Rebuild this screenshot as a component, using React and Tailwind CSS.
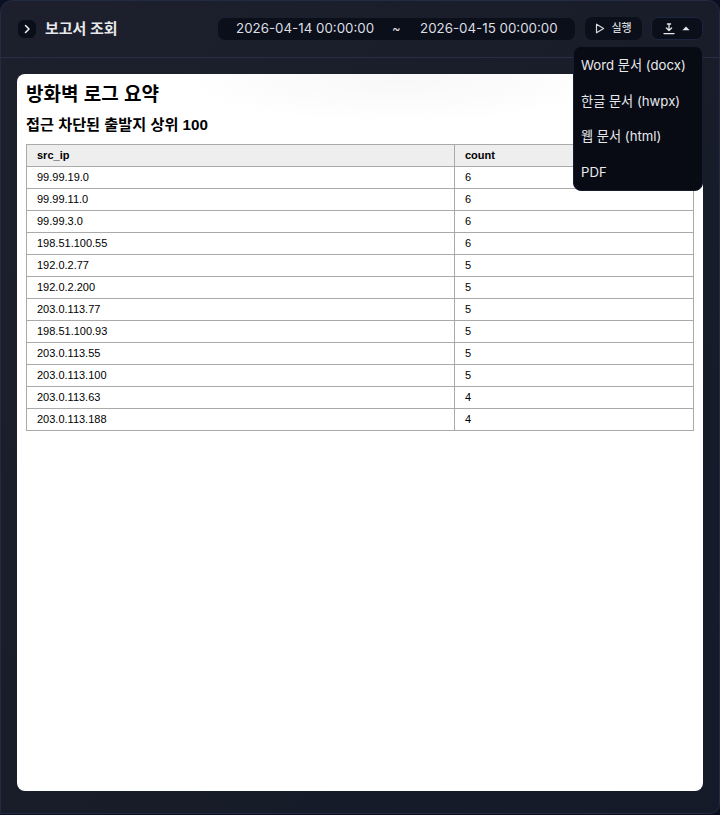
import React from "react";

const rows = [
  ["99.99.19.0", 6], ["99.99.11.0", 6], ["99.99.3.0", 6], ["198.51.100.55", 6],
  ["192.0.2.77", 5], ["192.0.2.200", 5], ["203.0.113.77", 5], ["198.51.100.93", 5],
  ["203.0.113.55", 5], ["203.0.113.100", 5], ["203.0.113.63", 4], ["203.0.113.188", 4],
];

const ui = "font-['Inter','Noto_Sans_CJK_KR',sans-serif]";
const doc = "font-['Liberation_Sans','Noto_Sans_CJK_KR',sans-serif]";

export default function App() {
  return (
    <div className={`w-[720px] h-[815px] overflow-hidden bg-[#0b1020] ${ui}`}>
      <div className="relative h-[814px] flex flex-col rounded-tl-[12px] rounded-tr-[12px] rounded-br-[10px] border border-[#232a44] bg-gradient-to-br from-[#1d202c] to-[#141a28]">
        <header className="h-[57px] shrink-0 flex items-center pl-[17px] pr-[16px] pb-[1px] border-b border-[#2a2e44]">
          <button className="w-[18px] h-[18px] rounded-[6px] bg-[#0a0e18] flex items-center justify-center">
            <svg width="10" height="10" viewBox="0 0 10 10" fill="none" stroke="#f1f3f6" strokeWidth="1.5" strokeLinecap="round" strokeLinejoin="round">
              <path d="M3.5 1.5 7 5 3.5 8.5" />
            </svg>
          </button>
          <h1 className="ml-[9px] text-[15px] font-bold text-[#e6e8ec] leading-none">보고서 조회</h1>
          <div className="ml-auto w-[357px] h-[22px] rounded-[7px] bg-[#0b0f1a] flex items-center pl-[18px] text-[13.33px] text-[#dcdee2] whitespace-nowrap">
            <span className="w-[138px]">2026-04-14 00:00:00</span>
            <span className="ml-[18px] w-[8px] text-[13px]">~</span>
            <span className="ml-[20px]">2026-04-15 00:00:00</span>
          </div>
          <button className="ml-[10px] w-[57px] h-[23px] rounded-[7px] bg-[#0b0f1a] flex items-center justify-center gap-[6px] text-[11px] font-medium text-[#d8dade]">
            <svg width="10" height="11" viewBox="0 0 10 11" fill="none" stroke="#d8dade" strokeWidth="1.2" strokeLinejoin="round">
              <path d="M1.5 1.2v8.6L8.6 5.5z" />
            </svg>
            실행
          </button>
          <button className="ml-[9px] w-[52px] h-[23px] rounded-[7px] border border-[#1c2440] bg-[#0b0f1a] flex items-center justify-center gap-[7px] pr-[2px]">
            <svg width="12" height="12" viewBox="0 0 12 12" fill="none" stroke="#e6e8ec" strokeWidth="1.3" strokeLinecap="round" strokeLinejoin="round">
              <path d="M6 1v6.5M3.4 5 6 7.5 8.6 5M4.4 1h3.2M1 10.6h10" />
            </svg>
            <svg width="8" height="5" viewBox="0 0 8 5" fill="#e6e8ec"><path d="M4 .6 7.6 4.2H.4z" /></svg>
          </button>
        </header>

        <div className="absolute z-10 left-[572px] top-[45px] w-[130px] h-[145px] rounded-[8px] border border-[#171d30] bg-[#080b14] flex flex-col text-[13.2px] text-[#e8e9ec]">
          {["Word 문서 (docx)", "한글 문서 (hwpx)", "웹 문서 (html)", "PDF"].map((t) => (
            <div key={t} className="h-[36px] flex items-center pl-[7px] whitespace-nowrap translate-y-[0.5px]">{t}</div>
          ))}
        </div>

        <main className="mx-[16px] mt-[16px] h-[717px] rounded-[8px] bg-white bg-[radial-gradient(ellipse_220px_50px_at_380px_0,#f7f7f7,#ffffff)] px-[9px] text-black">
          <h2 className={`pt-[7px] text-[19px] leading-[28px] font-bold ${doc}`}>방화벽 로그 요약</h2>
          <h3 className={`mt-[5px] text-[15.2px] leading-[22px] font-bold ${doc}`}>접근 차단된 출발지 상위 100</h3>
          <table className={`mt-[8px] w-[668px] border-collapse table-fixed text-[11px] ${doc}`}>
            <thead>
              <tr className="h-[22px] bg-[#eeeeee]">
                <th className="w-[428px] border border-[#aaaaaa] pl-[10px] text-left font-bold">src_ip</th>
                <th className="border border-[#aaaaaa] pl-[10px] text-left font-bold">count</th>
              </tr>
            </thead>
            <tbody>
              {rows.map(([ip, c]) => (
                <tr key={ip} className="h-[22px]">
                  <td className="border border-[#aaaaaa] pl-[10px]">{ip}</td>
                  <td className="border border-[#aaaaaa] pl-[10px]">{c}</td>
                </tr>
              ))}
            </tbody>
          </table>
        </main>
      </div>
    </div>
  );
}
